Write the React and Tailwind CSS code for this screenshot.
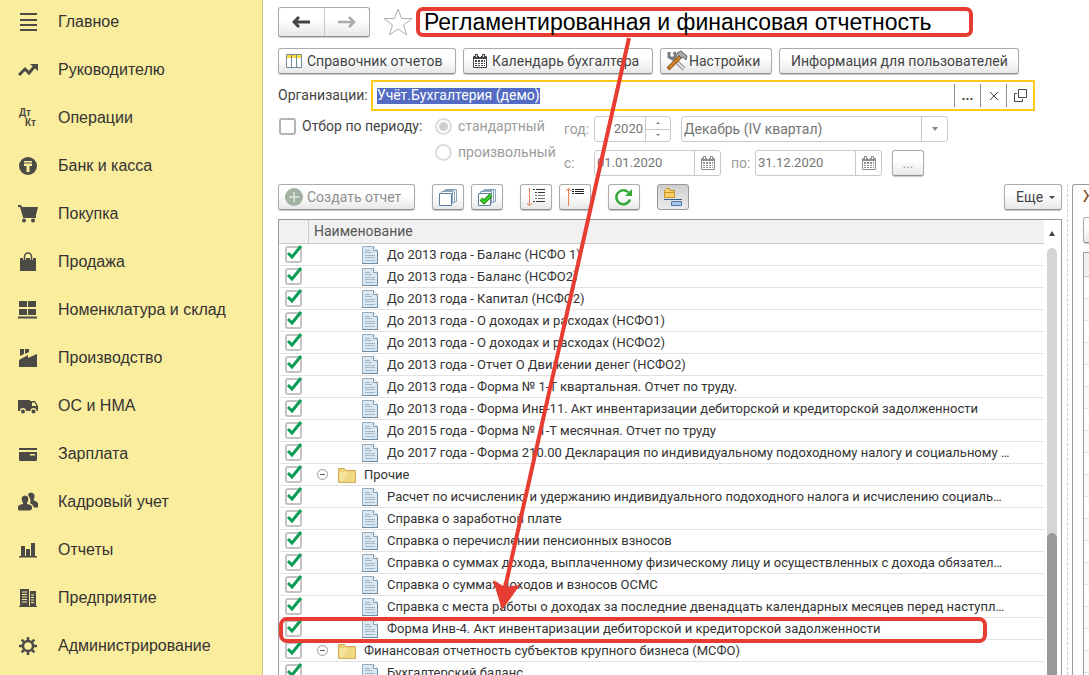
const sections = [
  { id: 'main', label: 'Главное' },
  { id: 'chief', label: 'Руководителю' },
  { id: 'operations', label: 'Операции' },
  { id: 'bank', label: 'Банк и касса' },
  { id: 'purchase', label: 'Покупка' },
  { id: 'sale', label: 'Продажа' },
  { id: 'stock', label: 'Номенклатура и склад' },
  { id: 'production', label: 'Производство' },
  { id: 'assets', label: 'ОС и НМА' },
  { id: 'salary', label: 'Зарплата' },
  { id: 'staff', label: 'Кадровый учет' },
  { id: 'reports', label: 'Отчеты' },
  { id: 'company', label: 'Предприятие' },
  { id: 'admin', label: 'Администрирование' },
];

const sectionIcons = {
  main: <path d="M2 1h17v2H2zM2 7h17v2H2zM2 12h17v2H2zM2 17h17v2H2z" />,
  chief: (
    <>
      <path d="M1 15l6-6 4 4 6-7" fill="none" stroke="currentColor" strokeWidth="3" />
      <path d="M12 4h8v7z" />
    </>
  ),
  operations: (
    <g fontFamily="Liberation Sans" fontWeight="bold" fontSize="10">
      <text x="1" y="8">Дт</text>
      <text x="7" y="18">Кт</text>
    </g>
  ),
  bank: (
    <>
      <circle cx="10" cy="10" r="9" />
      <path d="M6 5h8v1.500H6zM6 7.500h8v2.500h-2.500v6h-3v-6H6z" fill="#fbed9e" />
      <path d="M9.500 8.500h1V15h-1z" fill="#fbed9e" />
    </>
  ),
  purchase: (
    <>
      <path d="M0 1h3l1 2h16l-2.500 10H5L2 3H0z" />
      <path d="M5 12h13v2H5z" />
      <circle cx="6" cy="16.500" r="2" />
      <circle cx="15" cy="16.500" r="2" />
    </>
  ),
  sale: (
    <>
      <path d="M2 6h16v13H2z" />
      <path d="M6.500 8V5a3.500 3.500 0 017 0v3" fill="none" stroke="#fbed9e" strokeWidth="3" />
      <path d="M6.500 8.500V4.500a3.500 3.500 0 017 0v4" fill="none" stroke="currentColor" strokeWidth="1.500" />
    </>
  ),
  stock: <path d="M1 1h8v6H1zM10 1h8v6h-8zM1 9h8v6H1zM10 9h8v6h-8zM0 16.500h19v2H0z" />,
  production: <path d="M2 1h4v5l-4 2zM7 1h4v3L7 6zM1 12l9-5v3l9-4v13H1z" />,
  assets: (
    <>
      <path d="M0 4h12v11H0zM12 5h5l3 5v5h-8z" />
      <path d="M14 6.500h2.500l2 3.500H14z" fill="#fbed9e" />
      <circle cx="5" cy="15" r="3" fill="#fbed9e" />
      <circle cx="15.500" cy="15" r="3" fill="#fbed9e" />
      <circle cx="5" cy="15.500" r="2" />
      <circle cx="15.500" cy="15.500" r="2" />
    </>
  ),
  salary: (
    <>
      <path d="M1 4h18v2H1zM1 8h18v8q0 1-1 1H2q-1 0-1-1z" />
      <path d="M12 10h5v1.500h-5z" fill="#fbed9e" />
    </>
  ),
  staff: (
    <>
      <path d="M10 2q3-3 6 0 1.500 2-.5 6l3.500 2q2 2 1 5.500h-4q-1-3-4-4.500 1.500-4-1.500-7z" />
      <path d="M4 5q3-3 6 0 1 3-1 6v1q5 1 5 3v2q-1 1.500-3 1.500H3q-3 0-3-1.500v-2q0-2 5-3v-1Q3 8 4 5z" />
    </>
  ),
  reports: <path d="M1 16h18v1.500H1zM3 6h4v11H3zM8 9h4v8H8zM13 3h4v14h-4z" />,
  company: (
    <>
      <path d="M2 1h9v18H2zM12 3h6v16h-6zM1 18h18v1H1z" />
      <path d="M4 4h5M4 6.500h5M4 9h5M4 11.500h5M4 14h5M13 7h3M13 9.500h3M13 12h3M13 14.500h3" stroke="#fbed9e" />
    </>
  ),
  admin: (
    <>
      <circle cx="10" cy="10" r="5" fill="none" stroke="currentColor" strokeWidth="2.500" />
      <path
        d="M10 1v3M10 16v3M1 10h3M16 10h3M3.600 3.600l2.200 2.200M14.200 14.200l2.200 2.200M3.600 16.400l2.200-2.200M14.200 5.800l2.200-2.200"
        stroke="currentColor"
        strokeWidth="2.500"
      />
    </>
  ),
};

const rows = [
  { name: 'До 2013 года - Баланс (НСФО 1)' },
  { name: 'До 2013 года - Баланс (НСФО2)' },
  { name: 'До 2013 года - Капитал (НСФО2)' },
  { name: 'До 2013 года - О доходах и расходах (НСФО1)' },
  { name: 'До 2013 года - О доходах и расходах (НСФО2)' },
  { name: 'До 2013 года - Отчет О Движении денег (НСФО2)' },
  { name: 'До 2013 года - Форма № 1-Т квартальная. Отчет по труду.' },
  { name: 'До 2013 года - Форма Инв-11. Акт инвентаризации дебиторской и кредиторской задолженности' },
  { name: 'До 2015 года - Форма № 1-Т месячная. Отчет по труду' },
  { name: 'До 2017 года - Форма 210.00 Декларация по индивидуальному подоходному налогу и социальному …' },
  { name: 'Прочие', group: true },
  { name: 'Расчет по исчислению и удержанию индивидуального подоходного налога и исчислению социаль…' },
  { name: 'Справка о заработной плате' },
  { name: 'Справка о перечислении пенсионных взносов' },
  { name: 'Справка о суммах дохода, выплаченному физическому лицу и осуществленных с дохода обязател…' },
  { name: 'Справка о суммах доходов и взносов ОСМС' },
  { name: 'Справка с места работы о доходах за последние двенадцать календарных месяцев перед наступл…' },
  { name: 'Форма Инв-4. Акт инвентаризации дебиторской и кредиторской задолженности' },
  { name: 'Финансовая отчетность субъектов крупного бизнеса (МСФО)', group: true },
  { name: 'Бухгалтерский баланс' },
];

const Button = ({ children, className = '', ...props }) => (
  <button
    type="button"
    className={`flex h-[26px] shrink-0 items-center rounded-[3px] border border-[#ababab] border-b-[#8f8f8f] bg-linear-to-b from-white from-40% to-[#e8e8e8] shadow-[0_1px_1px_#c8c8c8] ${className}`}
    {...props}
  >
    {children}
  </button>
);

const CalendarIcon = ({ className }) => (
  <svg viewBox="0 0 14 14" className={className} fill="currentColor">
    <path d="M1 2h12q1 0 1 1v10q0 1-1 1H1q-1 0-1-1V3q0-1 1-1z" />
    <path d="M1 5h12v8H1z" fill="#fff" />
    <path d="M2 6h2v2H2zM5 6h2v2H5zM8 6h2v2H8zM11 6h1v2h-1zM2 9h2v1H2zM5 9h2v1H5zM8 9h2v1H8zM11 9h1v1h-1zM2 11h2v1H2zM5 11h2v1H5zM8 11h2v1H8zM11 11h1v1h-1z" />
    <path d="M2 0h3v3H2zM9 0h3v3H9z" />
    <path d="M3 1h1v2H3zM10 1h1v2h-1zM6 0h2v3H6z" fill="#fff" />
  </svg>
);

const SheetsIcon = ({ checked }) => (
  <svg viewBox="0 0 18 18" className="h-[18px] w-[18px]" fill="#fff" stroke="#5b7f9d">
    <path d="M6.500 1.500h11v12h-11z" stroke="#8ba6bb" />
    <path d="M4.500 2.500h11v12h-11z" stroke="#8ba6bb" />
    <path d="M2.500 3.500h11v12h-11z" stroke="#8ba6bb" />
    <path d="M.5 5.500h12v12H.5z" />
    {checked && <path d="M3 11l3 3 7-7" fill="none" stroke="#1f8a12" strokeWidth="4" />}
    {checked && <path d="M3 11l3 3 7-7" fill="none" stroke="#3bd02a" strokeWidth="2" />}
  </svg>
);

const DocIcon = () => (
  <svg viewBox="0 0 16 18" className="h-[18px] w-4 shrink-0">
    <path d="M.5.5h11l4 4v13H.5z" fill="#dbe7f1" stroke="#93aec4" />
    <path d="M11.500.5v4h4" fill="#fff" stroke="#7f9db5" />
    <path d="M3 4.500h5M3 6.500h7M3 9.500h10M3 11.500h10M3 14.500h10" stroke="#a2b7c8" />
    <path d="M0 17.500h16M15.500 5v13" stroke="#6c8ba4" />
  </svg>
);

const FolderIcon = () => (
  <svg viewBox="0 0 18 16" className="h-4 w-[18px] shrink-0">
    <path d="M.5 1.500h6l2 2h9v12H.5z" fill="#eed27a" stroke="#cfab57" />
    <path d="M1.500 5.500h15v9h-15z" fill="#f8e59c" />
    <path d="M10 5h6.500v9.500H5z" fill="#f0d884" />
  </svg>
);

const DateField = ({ label, value }) => (
  <div className="flex h-[26px] w-[127px] rounded-[3px] border border-[#c9c9c9]">
    <input aria-label={label} disabled defaultValue={value} className="w-[99px] bg-transparent pl-0.5 text-[13px] text-[#757575]" />
    <button type="button" aria-label={`Выбрать: ${label}`} disabled className="flex flex-1 items-center justify-center border-l border-[#c9c9c9] text-[#909090]">
      <CalendarIcon className="h-3.5 w-3.5" />
    </button>
  </div>
);

const Sidebar = () => (
  <nav className="flex w-[263px] shrink-0 flex-col gap-1.5 border-r border-[#cfc388] bg-[#fbed9e] pt-px font-['Liberation_Sans',sans-serif] text-[16px] text-[#333]">
    {sections.map(({ id, label }) => (
      <a key={id} href={`#${id}`} className="flex h-[42px] shrink-0 items-center gap-5 pl-[18px]">
        <svg viewBox="0 0 20 20" className="h-5 w-5 text-[#4b4a45]" fill="currentColor">
          {sectionIcons[id]}
        </svg>
        {label}
      </a>
    ))}
  </nav>
);

const TitleRow = () => (
  <div className="flex h-[30px] items-center">
    <div className="flex h-[30px] w-[92px] rounded-[3px] border border-[#ababab] border-b-[#8f8f8f] bg-linear-to-b from-white from-40% to-[#e8e8e8] shadow-[0_1px_1px_#c8c8c8]">
      <button type="button" aria-label="Назад" className="flex flex-1 items-center justify-center border-r border-[#c9c9c9]">
        <svg viewBox="0 0 18 12" className="h-3 w-[18px]" fill="none" stroke="#444" strokeWidth="3">
          <path d="M2 6h16M7 1L2 6l5 5" />
        </svg>
      </button>
      <button type="button" aria-label="Вперед" className="flex flex-1 items-center justify-center">
        <svg viewBox="0 0 18 12" className="h-3 w-[18px]" fill="none" stroke="#aaa" strokeWidth="2.500">
          <path d="M0 6h16M11 1l5 5-5 5" />
        </svg>
      </button>
    </div>
    <button type="button" aria-label="В избранное" className="ml-[13px]">
      <svg viewBox="0 0 30 28" className="h-7 w-[30px]" fill="#fff" stroke="#a9b0b8">
        <path d="M15 1l3.500 9.500H29l-8.500 6.500 3.200 10L15 21l-8.700 6 3.200-10L1 10.500h10.500z" />
      </svg>
    </button>
    <h1 className="ml-[3px] flex h-[30px] w-[557px] items-center rounded-[7px] border-4 border-[#e63c31] pl-1 font-['Liberation_Sans',sans-serif] text-[23px] whitespace-nowrap text-black">
      Регламентированная и финансовая отчетность
    </h1>
  </div>
);

const CommandRow = () => (
  <div className="mt-[11px] flex gap-[7px] text-[14px]">
    <Button className="w-[178px] gap-[5px] pl-[7px]">
      <svg viewBox="0 0 16 14" className="h-3.5 w-4">
        <path d="M.5.5h15v13H.5z" fill="#fff" stroke="#71889b" />
        <path d="M1 1h14v3H1z" fill="#ffd93b" />
        <path d="M5.500 1v12M10.500 1v12" stroke="#71889b" />
      </svg>
      Справочник отчетов
    </Button>
    <Button className="w-[190px] gap-[5px] pl-[9px]">
      <CalendarIcon className="h-3.5 w-3.5" />
      Календарь бухгалтера
    </Button>
    <Button className="w-28 gap-px pl-[5px]">
      <svg viewBox="0 0 22 22" className="h-[22px] w-[22px]" fill="none">
        <path d="M6 7l12 12" stroke="#8b8f92" strokeWidth="4" />
        <path d="M6 7l12 12" stroke="#e4e7e9" strokeWidth="2" />
        <path d="M3 2v5l4 2 3-3-2-4" stroke="#777c80" strokeWidth="3" />
        <path d="M15 6L2 19" stroke="#9a5712" strokeWidth="4" />
        <path d="M14 7L3 18" stroke="#d38a35" strokeWidth="2" />
        <path d="M11 3l4-2 6 5-1 4-3-3-2 1z" fill="#a7abae" stroke="#5e6266" />
      </svg>
      Настройки
    </Button>
    <Button className="w-60 pl-[11px]">Информация для пользователей</Button>
  </div>
);

const OrganizationRow = () => (
  <div className="mt-1.5 mr-[54px] flex h-[31px] items-center text-[14px]">
    <label htmlFor="organization" className="w-[93px] shrink-0">Организации:</label>
    <div className="flex h-[31px] min-w-0 flex-1 items-center border-2 border-[#fbcb17] pl-1">
      <input
        id="organization"
        defaultValue="Учёт.Бухгалтерия (демо)"
        className="field-sizing-content h-4 bg-[#536bc2] text-white outline-none"
      />
      <div className="ml-auto flex h-[23px] text-[#444]">
        <button type="button" className="w-[26px] border-l border-[#8d8d8d] font-bold">...</button>
        <button type="button" aria-label="Очистить" className="flex w-[26px] items-center justify-center border-l border-[#8d8d8d]">
          <svg viewBox="0 0 10 10" className="h-2.5 w-2.5" stroke="currentColor">
            <path d="M1 1l8 8M9 1L1 9" />
          </svg>
        </button>
        <button type="button" aria-label="Открыть" className="flex w-[27px] items-center justify-center border-l border-[#8d8d8d]">
          <svg viewBox="0 0 13 13" className="h-[13px] w-[13px]" fill="none" stroke="currentColor">
            <path d="M4.500.5h8v8h-8zM3 4.500H.5v8h8V10" />
          </svg>
        </button>
      </div>
    </div>
  </div>
);

const PeriodFilter = () => (
  <div className="mt-[5px] flex h-[61px] pl-px text-[14px] text-[#9c9c9c]">
    <label className="flex h-5 w-[156px] items-center gap-1.5 text-[#444]">
      <input type="checkbox" className="h-[17px] w-[17px] appearance-none rounded-[3px] border-2 border-[#b4b4b4]" />
      Отбор по периоду:
    </label>
    <div className="flex w-[129px] flex-col gap-1.5">
      <label className="flex h-5 items-center gap-1.5">
        <input type="radio" name="period" disabled defaultChecked className="h-[17px] w-[17px] appearance-none rounded-full border-2 border-[#dcdcdc] bg-[#cfcfcf] bg-clip-content p-0.5" />
        стандартный
      </label>
      <label className="flex h-5 items-center gap-1.5">
        <input type="radio" name="period" disabled className="h-[17px] w-[17px] appearance-none rounded-full border-2 border-[#dcdcdc]" />
        произвольный
      </label>
    </div>
    <div className="flex flex-col gap-2">
      <div className="flex items-center">
        <label htmlFor="year" className="w-[30px]">год:</label>
        <div className="flex h-[26px] w-[77px] rounded-[3px] border border-[#c9c9c9]">
          <input id="year" disabled defaultValue="2020" className="w-[50px] bg-transparent pr-0.5 text-right text-[13px] text-[#757575]" />
          <div className="flex flex-1 flex-col border-l border-[#c9c9c9]">
            <button type="button" aria-label="Больше" disabled className="flex flex-1 items-center justify-center border-b border-[#c9c9c9]">
              <svg viewBox="0 0 4 2" className="h-0.5 w-1" fill="#777"><path d="M0 2l2-2 2 2z" /></svg>
            </button>
            <button type="button" aria-label="Меньше" disabled className="flex flex-1 items-center justify-center">
              <svg viewBox="0 0 4 2" className="h-0.5 w-1" fill="#777"><path d="M0 0l2 2 2-2z" /></svg>
            </button>
          </div>
        </div>
        <div className="ml-2.5 flex h-[26px] w-[267px] items-center rounded-[3px] border border-[#c9c9c9]">
          <select aria-label="Период" disabled className="h-6 flex-1 appearance-none pl-0.5 text-[#757575] opacity-100">
            <option>Декабрь (IV квартал)</option>
          </select>
          <span className="flex h-6 w-[26px] items-center justify-center border-l border-[#c9c9c9]">
            <svg viewBox="0 0 6 4" className="h-1 w-1.5" fill="#888"><path d="M0 0h6L3 4z" /></svg>
          </span>
        </div>
      </div>
      <div className="flex items-center">
        <span className="w-[30px]">с:</span>
        <DateField label="Начало периода" value="01.01.2020" />
        <span className="ml-2.5 w-6">по:</span>
        <DateField label="Конец периода" value="31.12.2020" />
        <Button disabled className="ml-2.5 w-8 justify-center">...</Button>
      </div>
    </div>
  </div>
);

const Toolbar = () => (
  <div className="flex text-[14px]">
    <Button disabled className="w-[137px] gap-1 pl-1.5 text-[#8f8f8f]">
      <svg viewBox="0 0 18 18" className="h-[18px] w-[18px]">
        <circle cx="9" cy="9" r="9" fill="#a0b3a2" />
        <path d="M9 4v10M4 9h10" stroke="#d4dcd4" strokeWidth="2" />
      </svg>
      Создать отчет
    </Button>
    <div className="ml-[17px] flex gap-[7px]">
      <Button aria-label="Снять отметки" className="w-8 justify-center"><SheetsIcon /></Button>
      <Button aria-label="Отметить все" className="w-8 justify-center"><SheetsIcon checked /></Button>
    </div>
    <div className="ml-[17px] flex gap-[7px]">
      <Button aria-label="Развернуть" className="w-8 justify-center">
        <svg viewBox="0 0 18 18" className="h-[18px] w-[18px]" fill="none">
          <path d="M2.500 0v17M0 15l2.500 3L5 15" stroke="#ef8354" />
          <path d="M6 1.500h2M9 1.500h9M8 4.500h2M11 4.500h7M6 13.500h2M9 13.500h9" stroke="#333" />
          <path d="M8 7.500h2M11 7.500h7M8 10.500h2M11 10.500h7" stroke="#777" />
        </svg>
      </Button>
      <Button aria-label="Свернуть" className="w-8 justify-center">
        <svg viewBox="0 0 18 18" className="h-[18px] w-[18px]" fill="none">
          <path d="M2.500 1v17M0 3l2.500-3L5 3" stroke="#ef8354" />
          <path d="M6 1.500h2M9 1.500h9M6 3.500h2M9 3.500h9M6 5.500h2M9 5.500h9" stroke="#222" />
        </svg>
      </Button>
    </div>
    <Button aria-label="Обновить" className="ml-[17px] w-8 justify-center">
      <svg viewBox="0 0 18 18" className="h-[18px] w-[18px]" fill="none" stroke="#35a935" strokeWidth="2.500">
        <path d="M15 11.500A7 7 0 1113.500 4.500" />
        <path d="M17 1v7h-7z" fill="#35a935" stroke="none" />
      </svg>
    </Button>
    <button type="button" aria-label="Группировка" className="ml-[17px] flex h-[26px] w-8 items-center justify-center rounded-[3px] border border-[#999] bg-linear-to-b from-[#cfcfcf] to-[#ececec]">
      <svg viewBox="0 0 18 18" className="h-[18px] w-[18px]">
        <path d="M.5 2.500l2-2h3l1 2h4v7H.5z" fill="#f6cf6c" stroke="#cc9327" />
        <path d="M.5 4.500h10" stroke="#cc9327" />
        <path d="M0 11.500h18" stroke="#3c5f8c" />
        <path d="M7.500 13.500h10v4h-10z" fill="#a6c7ea" stroke="#4c79ad" />
      </svg>
    </button>
    <Button className="ml-auto w-[58px] gap-1.5 pl-[11px]">
      Еще
      <svg viewBox="0 0 6 3" className="h-[3px] w-1.5" fill="#444"><path d="M0 0h6L3 3z" /></svg>
    </Button>
  </div>
);

const RowCheckbox = ({ name }) => (
  <span className="relative ml-1.5 block h-[17px] w-[17px]">
    <input type="checkbox" defaultChecked aria-label={name} className="block h-[17px] w-[17px] appearance-none rounded-[3px] border-2 border-[#c4c4c4] bg-white" />
    <svg viewBox="0 0 17 17" className="pointer-events-none absolute inset-0 h-[17px] w-[17px] overflow-visible" fill="none" stroke="#0b9d55" strokeWidth="3">
      <path d="M3 7l4 4 9-11" />
    </svg>
  </span>
);

const ReportTable = () => (
  <div className="mt-[9px] flex min-h-0 flex-1 overflow-hidden border border-b-0 border-[#9b9b9b]">
    <div className="min-w-0 flex-1 overflow-hidden">
      <table className="w-full table-fixed border-separate border-spacing-0 text-left text-[13px] text-[#333]">
        <thead className="text-[14px] text-[#555]">
          <tr className="h-6 bg-[#f1f1f1]">
            <th aria-label="Отметка" className="w-[30px] border-r border-b border-[#c9c9c9] p-0"></th>
            <th className="border-b border-[#c9c9c9] p-0 pl-[5px] font-normal">Наименование</th>
          </tr>
        </thead>
        <tbody>
          {rows.map(({ name, group }) => (
            <tr key={name} className="h-[22px]">
              <td className="border-b border-[#e2e2e2] p-0">
                <RowCheckbox name={name} />
              </td>
              <td className="border-b border-[#e2e2e2] p-0">
                {group ? (
                  <div className="flex h-[21px] items-center pl-2">
                    <button type="button" aria-label="Свернуть группу" className="mr-2.5">
                      <svg viewBox="0 0 11 11" className="h-[11px] w-[11px]" fill="none" stroke="#999">
                        <circle cx="5.500" cy="5.500" r="5" />
                        <path d="M3 5.500h5" stroke="#555" />
                      </svg>
                    </button>
                    <FolderIcon />
                    <span className="ml-2 truncate">{name}</span>
                  </div>
                ) : (
                  <div className="flex h-[21px] items-center gap-[9px] pl-[53px]">
                    <DocIcon />
                    <span className="truncate">{name}</span>
                  </div>
                )}
              </td>
            </tr>
          ))}
        </tbody>
      </table>
    </div>
    <div className="flex w-[17px] flex-col items-center pr-0.5">
      <svg viewBox="0 0 6 5" className="mt-[11px] h-[5px] w-1.5 shrink-0" fill="#444"><path d="M0 5l3-5 3 5z" /></svg>
      <div className="mt-3 flex w-2.5 flex-1 flex-col justify-end rounded-t-full bg-[#d5d5d5]">
        <div className="h-1/3 rounded-t-full bg-[#999]"></div>
      </div>
    </div>
  </div>
);

const SidePanel = () => (
  <aside className="flex w-[17px] shrink-0 flex-col overflow-hidden rounded-tl-[3px] border-t border-l border-[#9b9b9b] pl-2.5">
    <h2 className="h-6 text-[16px] leading-6 text-[#7a4a14]">Журнал</h2>
    <Button aria-label="Создать" className="mt-2 w-20"></Button>
    <div className="mt-[9px] w-40 flex-1 border-t border-l border-[#9b9b9b]">
      <div className="h-6 border-b border-[#c9c9c9] bg-[#f1f1f1]"></div>
      {rows.slice(1).map(({ name }) => (
        <div key={name} className="h-[22px] border-b border-[#e2e2e2] even:bg-white odd:bg-[#fafafa]"></div>
      ))}
    </div>
  </aside>
);

// Red marks drawn over the window: arrow from the title to the highlighted report
const Annotations = () => (
  <svg className="pointer-events-none absolute top-0 left-0 h-full w-full" fill="none" stroke="#e63c31">
    <path d="M366 38L242 588" strokeWidth="4" />
    <path d="M239 610l-9-30 12 7 15-2z" fill="#e63c31" stroke="none" />
    <rect x="18" y="619" width="704" height="22" rx="6" strokeWidth="4" />
  </svg>
);

export default function App() {
  return (
    <div className="flex h-screen overflow-hidden bg-white font-[Roboto,'Liberation_Sans',sans-serif] text-[#444]">
      <Sidebar />
      <main className="relative flex min-w-0 flex-1 flex-col overflow-hidden pt-[7px] pl-[15px]">
        <TitleRow />
        <CommandRow />
        <OrganizationRow />
        <PeriodFilter />
        <div className="mt-[7px] flex min-h-0 flex-1">
          <section className="flex min-w-0 flex-1 flex-col">
            <Toolbar />
            <ReportTable />
          </section>
          <div className="mr-1 ml-[5px] border-l border-dashed border-[#cfcfcf]"></div>
          <SidePanel />
        </div>
        <Annotations />
      </main>
    </div>
  );
}
